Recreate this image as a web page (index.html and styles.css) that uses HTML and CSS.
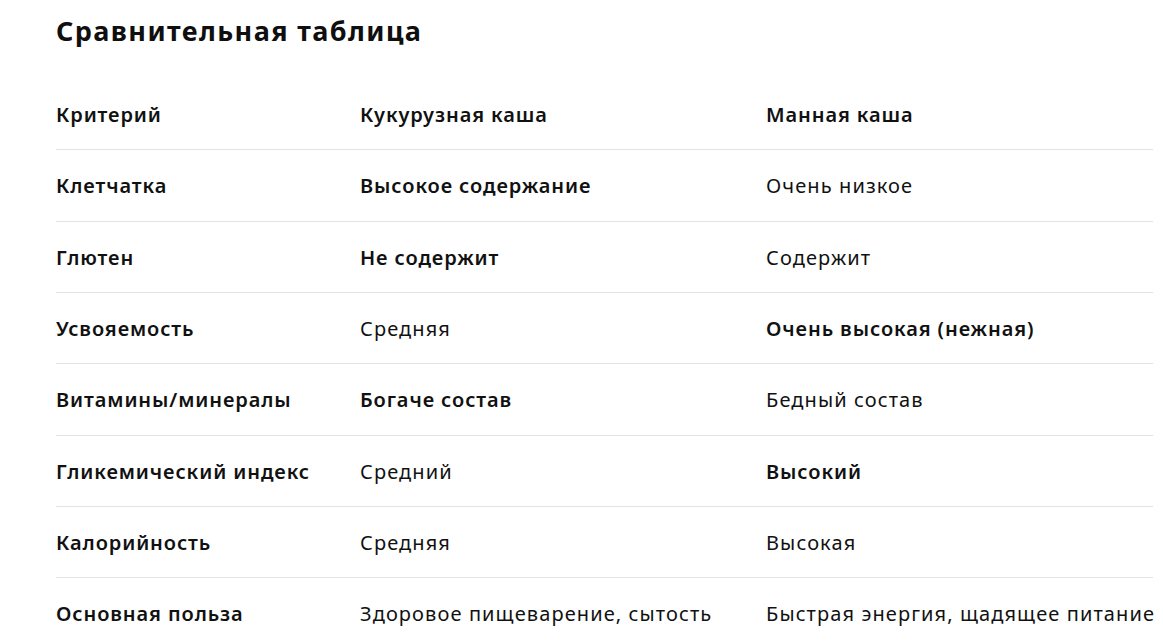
FILE: index.html
```html
<!DOCTYPE html>
<html lang="ru">
<head>
<meta charset="utf-8">
<title>Сравнительная таблица</title>
<link rel="stylesheet" href="styles.css">
</head>
<body>
<main class="page">
  <h2 class="title">Сравнительная таблица</h2>
  <table class="cmp">
    <colgroup>
      <col class="c1"><col class="c2"><col class="c3">
    </colgroup>
    <thead>
      <tr><th>Критерий</th><th>Кукурузная каша</th><th>Манная каша</th></tr>
    </thead>
    <tbody>
      <tr><td class="b">Клетчатка</td><td class="b">Высокое содержание</td><td>Очень низкое</td></tr>
      <tr><td class="b">Глютен</td><td class="b">Не содержит</td><td>Содержит</td></tr>
      <tr><td class="b">Усвояемость</td><td>Средняя</td><td class="b">Очень высокая (нежная)</td></tr>
      <tr><td class="b">Витамины/минералы</td><td class="b">Богаче состав</td><td>Бедный состав</td></tr>
      <tr><td class="b">Гликемический индекс</td><td>Средний</td><td class="b">Высокий</td></tr>
      <tr><td class="b">Калорийность</td><td>Средняя</td><td>Высокая</td></tr>
      <tr><td class="b">Основная польза</td><td>Здоровое пищеварение, сытость</td><td>Быстрая энергия, щадящее питание</td></tr>
    </tbody>
  </table>
</main>
</body>
</html>
```

FILE: styles.css
```css
html, body {
  margin: 0;
  padding: 0;
  background: #ffffff;
}
body {
  font-family: "Noto Sans", "Open Sans", "DejaVu Sans", sans-serif;
  color: #111111;
  overflow: hidden;
}
.page {
  padding: 0 0 0 56px;
  width: 1097px;
}
.title {
  margin: 0;
  padding-top: 12px;
  font-size: 27px;
  letter-spacing: 1.4px;
  font-weight: 700;
  line-height: 38px;
  color: #0f0f0f;
}
.cmp {
  margin-top: 29px;
  width: 1097px;
  border-collapse: collapse;
  table-layout: fixed;
  font-size: 20px;
  letter-spacing: 0.9px;
}
.c1 { width: 304px; }
.c2 { width: 406px; }
.c3 { width: 387px; }
.cmp th, .cmp td {
  text-align: left;
  padding: 20px 0 19px 0;
  line-height: 31.33px;
  white-space: nowrap;
  vertical-align: middle;
}
.cmp th {
  font-weight: 600;
}
.cmp td {
  font-weight: 400;
  letter-spacing: 1.1px;
}
.cmp td.b {
  font-weight: 600;
  letter-spacing: 0.9px;
}
.cmp tbody tr td {
  border-top: 1px solid #e3e3e3;
}
```
